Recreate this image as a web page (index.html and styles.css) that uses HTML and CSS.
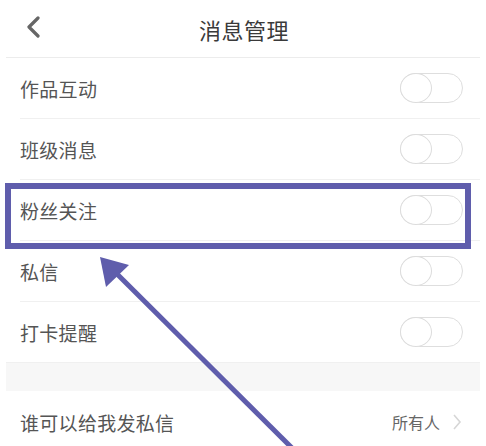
FILE: index.html
```html
<!DOCTYPE html>
<html lang="zh">
<head>
<meta charset="utf-8">
<link rel="stylesheet" href="styles.css">
</head>
<body>
<div class="page">
  <div class="header">
    <svg class="back" width="16" height="22" viewBox="0 0 16 22"><path d="M13 2 L4 11 L13 20" fill="none" stroke="#666" stroke-width="3.2" stroke-linecap="round" stroke-linejoin="round"/></svg>
    <div class="title">消息管理</div>
  </div>
  <div class="row"><span class="label">作品互动</span><span class="toggle"><span class="knob"></span></span></div>
  <div class="row"><span class="label">班级消息</span><span class="toggle"><span class="knob"></span></span></div>
  <div class="row"><span class="label">粉丝关注</span><span class="toggle"><span class="knob"></span></span></div>
  <div class="row"><span class="label">私信</span><span class="toggle"><span class="knob"></span></span></div>
  <div class="row last"><span class="label">打卡提醒</span><span class="toggle"><span class="knob"></span></span></div>
  <div class="band"></div>
  <div class="row link"><span class="label">谁可以给我发私信</span><span class="value">所有人<svg class="chev" width="10" height="18" viewBox="0 0 10 18"><path d="M2 2 L8 9 L2 16" fill="none" stroke="#d6d6d6" stroke-width="1.6"/></svg></span></div>
</div>
<svg class="overlay" width="486" height="446" viewBox="0 0 486 446">
  <rect x="8" y="186" width="460" height="60" fill="none" stroke="#5f5dac" stroke-width="6"/>
  <line x1="292" y1="448" x2="108" y2="265" stroke="#5f5dac" stroke-width="5"/>
  <polygon points="100,257 106,287 129,265" fill="#5f5dac"/>
</svg>
</body>
</html>
```
FILE: styles.css
```css
html, body {
  margin: 0;
  padding: 0;
  background: #fff;
}
body {
  width: 486px;
  height: 446px;
  overflow: hidden;
  position: relative;
  font-family: "Noto Sans CJK SC", "Noto Sans", sans-serif;
}
.page {
  padding: 0 6px;
}
.header {
  height: 57px;
  border-bottom: 1px solid #ececec;
  display: flex;
  align-items: center;
  justify-content: center;
  position: relative;
}
.back {
  position: absolute;
  left: 19px;
  top: 16px;
}
.title {
  font-size: 22px;
  color: #3a3a3a;
  letter-spacing: 0.5px;
  margin-left: 2px;
}
.row {
  height: 60px;
  border-bottom: 1px solid #f0f0f0;
  margin-left: 14px;
  display: flex;
  align-items: center;
  justify-content: space-between;
}
.row.last {
  border-bottom: none;
  margin-left: 0;
  padding-left: 14px;
}
.label {
  font-size: 19px;
  color: #555;
  letter-spacing: 0.3px;
}
.toggle {
  width: 61px;
  height: 28px;
  border: 1px solid #dedede;
  border-radius: 15px;
  margin-right: 17px;
  position: relative;
  box-sizing: content-box;
}
.knob {
  position: absolute;
  left: -1px;
  top: -1px;
  width: 30px;
  height: 28px;
  border: 1px solid #dcdcdc;
  border-radius: 50%;
  background: #fff;
}
.band {
  height: 28px;
  background: #f7f7f7;
  border-top: 1px solid #f0f0f0;
}
.row.link {
  border-bottom: none;
  height: 62px;
}
.value {
  display: flex;
  align-items: center;
  gap: 12px;
  font-size: 16px;
  color: #666;
  margin-right: 18px;
}
.overlay {
  position: absolute;
  left: 0;
  top: 0;
}
```
